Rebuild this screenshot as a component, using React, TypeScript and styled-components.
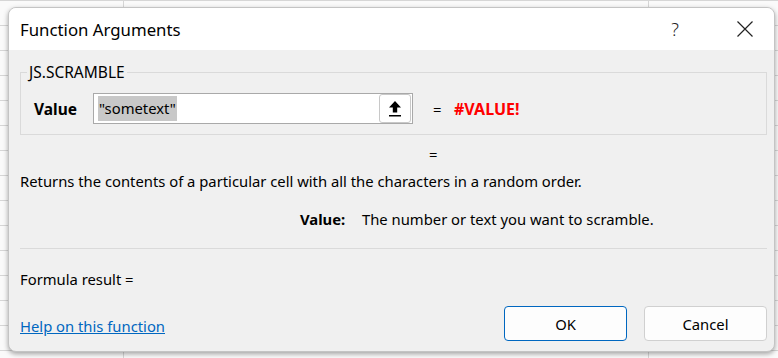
import styled, { createGlobalStyle } from "styled-components";

const GlobalStyle = createGlobalStyle`
  html, body {
    margin: 0;
    padding: 0;
  }
  body {
    font-family: "Noto Sans", "Open Sans", sans-serif;
    color: #000;
  }
`;

// spreadsheet peeking out behind the dialog
const Sheet = styled.div`
  width: 778px;
  height: 358px;
  overflow: hidden;
  box-sizing: border-box;
  padding: 7px 0 0 8px;
  background-color: #fafafa;
  background-image: linear-gradient(to bottom, #d6d6d6 1px, transparent 1px),
    linear-gradient(to right, #d6d6d6 1px, transparent 1px);
  background-size: 100% 25px, 525px 100%;
  background-position: 0 0, 123px 0;
`;

const Dialog = styled.div`
  width: 767px;
  height: 345px;
  background: #f0f0f0;
  border: 1px solid #c4c4c4;
  border-radius: 8px;
  box-shadow: 0 2px 5px rgba(0, 0, 0, 0.35);
  overflow: hidden;
  display: flex;
  flex-direction: column;
  box-sizing: border-box;
`;

const TitleBar = styled.div`
  height: 42px;
  background: #fff;
  display: flex;
  align-items: center;
  padding-left: 11px;
  flex-shrink: 0;
`;

const Title = styled.div`
  font-size: 16.8px;
  flex: 1;
`;

const TitleButton = styled.div<{ $w: number }>`
  width: ${(p) => p.$w}px;
  height: 42px;
  display: flex;
  align-items: center;
  justify-content: center;
  font-size: 18px;
  font-weight: 300;
  color: #222;
`;

const Body = styled.div`
  flex: 1;
  padding: 0 7px 0 11px;
  display: flex;
  flex-direction: column;
  font-size: 14.8px;
  line-height: 20px;
`;

const Group = styled.div`
  margin-top: 22px;
  height: 63px;
  box-sizing: border-box;
  border: 1px solid #dadada;
  padding-left: 13px;
  display: flex;
  flex-direction: column;
`;

const Legend = styled.div`
  align-self: flex-start;
  margin: -11px 0 0 -7px;
  padding: 0 2px;
  height: 20px;
  background: #f0f0f0;
  font-size: 15.5px;
`;

const ArgRow = styled.div`
  display: flex;
  align-items: center;
  margin-top: 11px;
`;

const ArgLabel = styled.span`
  width: 59px;
  font-weight: 700;
  font-size: 15.5px;
`;

const InputBox = styled.div`
  width: 320px;
  height: 31px;
  box-sizing: border-box;
  border: 1px solid #a9a9a9;
  background: #fff;
  display: flex;
  align-items: center;
  padding: 0 1px 0 4px;
`;

const Selected = styled.span`
  background: #c8c8c8;
  padding: 2px 1px 3px;
  flex: 0 0 auto;
`;

const Spacer = styled.div`
  flex: 1;
`;

const RefButton = styled.div`
  width: 32px;
  height: 29px;
  box-sizing: border-box;
  border: 1px solid #c8c8c8;
  border-radius: 3px;
  background: #fff;
  display: flex;
  align-items: center;
  justify-content: center;
`;

const Equals = styled.span`
  margin-left: 20px;
  width: 21px;
`;

const ErrorValue = styled.span`
  color: #ff0000;
  font-weight: 700;
  font-size: 16px;
`;

const ResultEquals = styled.div`
  padding-left: 409px;
  margin-top: 9px;
`;

const Description = styled.div`
  margin-top: 7px;
`;

const ArgHelp = styled.div`
  margin-top: 18px;
  display: flex;
  padding-left: 280px;
`;

const ArgHelpName = styled.span`
  font-weight: 700;
  width: 62px;
`;

const Divider = styled.div`
  height: 1px;
  background: #dadada;
  margin-top: 19px;
`;

const FormulaResult = styled.div`
  margin-top: 20px;
`;

const Footer = styled.div`
  display: flex;
  align-items: center;
  margin-top: 17px;
`;

const HelpLink = styled.a`
  color: #0067c0;
  text-decoration: underline;
  flex: 1;
  margin-top: 5px;
  cursor: pointer;
`;

const DialogButton = styled.button<{ $primary?: boolean }>`
  width: 123px;
  height: 35px;
  margin-left: ${(p) => (p.$primary ? "0" : "17px")};
  border: 1px solid ${(p) => (p.$primary ? "#0067c0" : "#d0d0d0")};
  border-radius: 4px;
  background: #fdfdfd;
  font-family: inherit;
  font-size: 14.8px;
  color: #000;
`;

const UploadIcon = () => (
  <svg width="14" height="17" viewBox="0 0 14 17">
    <path d="M7 1 L13 7.5 L9.2 7.5 L9.2 12.5 L4.8 12.5 L4.8 7.5 L1 7.5 Z" fill="#000" />
    <rect x="1" y="15" width="12" height="1.5" fill="#000" />
  </svg>
);

const CloseIcon = () => (
  <svg width="16" height="16" viewBox="0 0 16 16">
    <path d="M0.5 0.5 L15.5 15.5 M15.5 0.5 L0.5 15.5" stroke="#222" strokeWidth="1.2" />
  </svg>
);

export default function App() {
  return (
    <>
      <GlobalStyle />
      <Sheet>
        <Dialog>
          <TitleBar>
            <Title>Function Arguments</Title>
            <TitleButton $w={82}>?</TitleButton>
            <TitleButton $w={58}>
              <CloseIcon />
            </TitleButton>
          </TitleBar>
          <Body>
            <Group>
              <Legend>JS.SCRAMBLE</Legend>
              <ArgRow>
                <ArgLabel>Value</ArgLabel>
                <InputBox>
                  <Selected>"sometext"</Selected>
                  <Spacer />
                  <RefButton>
                    <UploadIcon />
                  </RefButton>
                </InputBox>
                <Equals>=</Equals>
                <ErrorValue>#VALUE!</ErrorValue>
              </ArgRow>
            </Group>
            <ResultEquals>=</ResultEquals>
            <Description>
              Returns the contents of a particular cell with all the characters in a random order.
            </Description>
            <ArgHelp>
              <ArgHelpName>Value:</ArgHelpName>
              <span>The number or text you want to scramble.</span>
            </ArgHelp>
            <Divider />
            <FormulaResult>Formula result =</FormulaResult>
            <Footer>
              <HelpLink>Help on this function</HelpLink>
              <DialogButton $primary>OK</DialogButton>
              <DialogButton>Cancel</DialogButton>
            </Footer>
          </Body>
        </Dialog>
      </Sheet>
    </>
  );
}
